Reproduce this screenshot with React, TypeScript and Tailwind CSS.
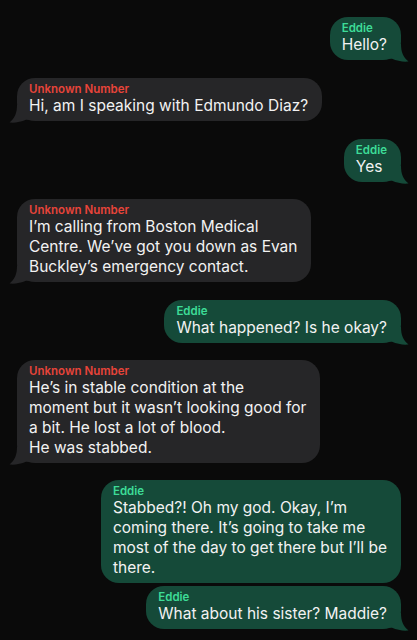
type Msg = {
  me: boolean;
  lines: string[];
  tail: boolean;
  gap: string;
};

const messages: Msg[] = [
  { me: true, lines: ['Hello?'], tail: true, gap: 'mt-0' },
  { me: false, lines: ['Hi, am I speaking with Edmundo Diaz?'], tail: true, gap: 'mt-[18px]' },
  { me: true, lines: ['Yes'], tail: true, gap: 'mt-[18px]' },
  {
    me: false,
    lines: ['I’m calling from Boston Medical', 'Centre. We’ve got you down as Evan', 'Buckley’s emergency contact.'],
    tail: true,
    gap: 'mt-[17px]',
  },
  { me: true, lines: ['What happened? Is he okay?'], tail: true, gap: 'mt-[18px]' },
  {
    me: false,
    lines: [
      'He’s in stable condition at the',
      'moment but it wasn’t looking good for',
      'a bit. He lost a lot of blood.',
      'He was stabbed.',
    ],
    tail: true,
    gap: 'mt-[17px]',
  },
  {
    me: true,
    lines: [
      'Stabbed?! Oh my god. Okay, I’m',
      'coming there. It’s going to take me',
      'most of the day to get there but I’ll be',
      'there.',
    ],
    tail: false,
    gap: 'mt-[17px]',
  },
  { me: true, lines: ['What about his sister? Maddie?'], tail: true, gap: 'mt-[3px]' },
];

function Tail({ me }: { me: boolean }) {
  if (me) {
    return (
      <svg
        className="absolute right-[-8px] bottom-[-2px] w-5 h-5 text-[#154a39]"
        viewBox="0 0 20 20"
        fill="currentColor"
      >
        <path d="M0 2 L12 2 C12 10 14 15 19.5 19.5 C14 20 8 19 3 16.8 L0 16.8 Z" />
      </svg>
    );
  }
  return (
    <svg
      className="absolute left-[-8px] bottom-[-2px] w-5 h-5 text-[#262628]"
      viewBox="0 0 20 20"
      fill="currentColor"
    >
      <path d="M20 2 L8 2 C8 10 6 15 0.5 19.5 C6 20 12 19 17 16.8 L20 16.8 Z" />
    </svg>
  );
}

function Bubble({ msg }: { msg: Msg }) {
  const bubbleColor = msg.me ? 'bg-[#154a39]' : 'bg-[#262628]';
  return (
    <div className={`flex ${msg.me ? 'justify-end pr-4' : 'justify-start pl-[17px]'} ${msg.gap}`}>
      <div className={`relative ${bubbleColor} rounded-[18px] pl-3 pr-[14px] pt-1 pb-[5px]`}>
        <div
          className={`text-[11.5px] leading-[14px] font-semibold ${
            msg.me ? 'text-[#3ddc97]' : 'text-[#e8443a]'
          }`}
        >
          {msg.me ? 'Eddie' : 'Unknown Number'}
        </div>
        <div className="text-[15.5px] leading-[20px] text-[#f2f2f2]">
          {msg.lines.map((line, i) => (
            <div key={i} className="whitespace-nowrap">
              {line}
            </div>
          ))}
        </div>
        {msg.tail && <Tail me={msg.me} />}
      </div>
    </div>
  );
}

export default function App() {
  return (
    <div
      className="min-h-[640px] bg-[#0a0a0a] pt-[17px] pb-3"
      style={{ fontFamily: 'Inter, "Noto Sans", sans-serif' }}
    >
      {messages.map((m, i) => (
        <Bubble key={i} msg={m} />
      ))}
    </div>
  );
}
